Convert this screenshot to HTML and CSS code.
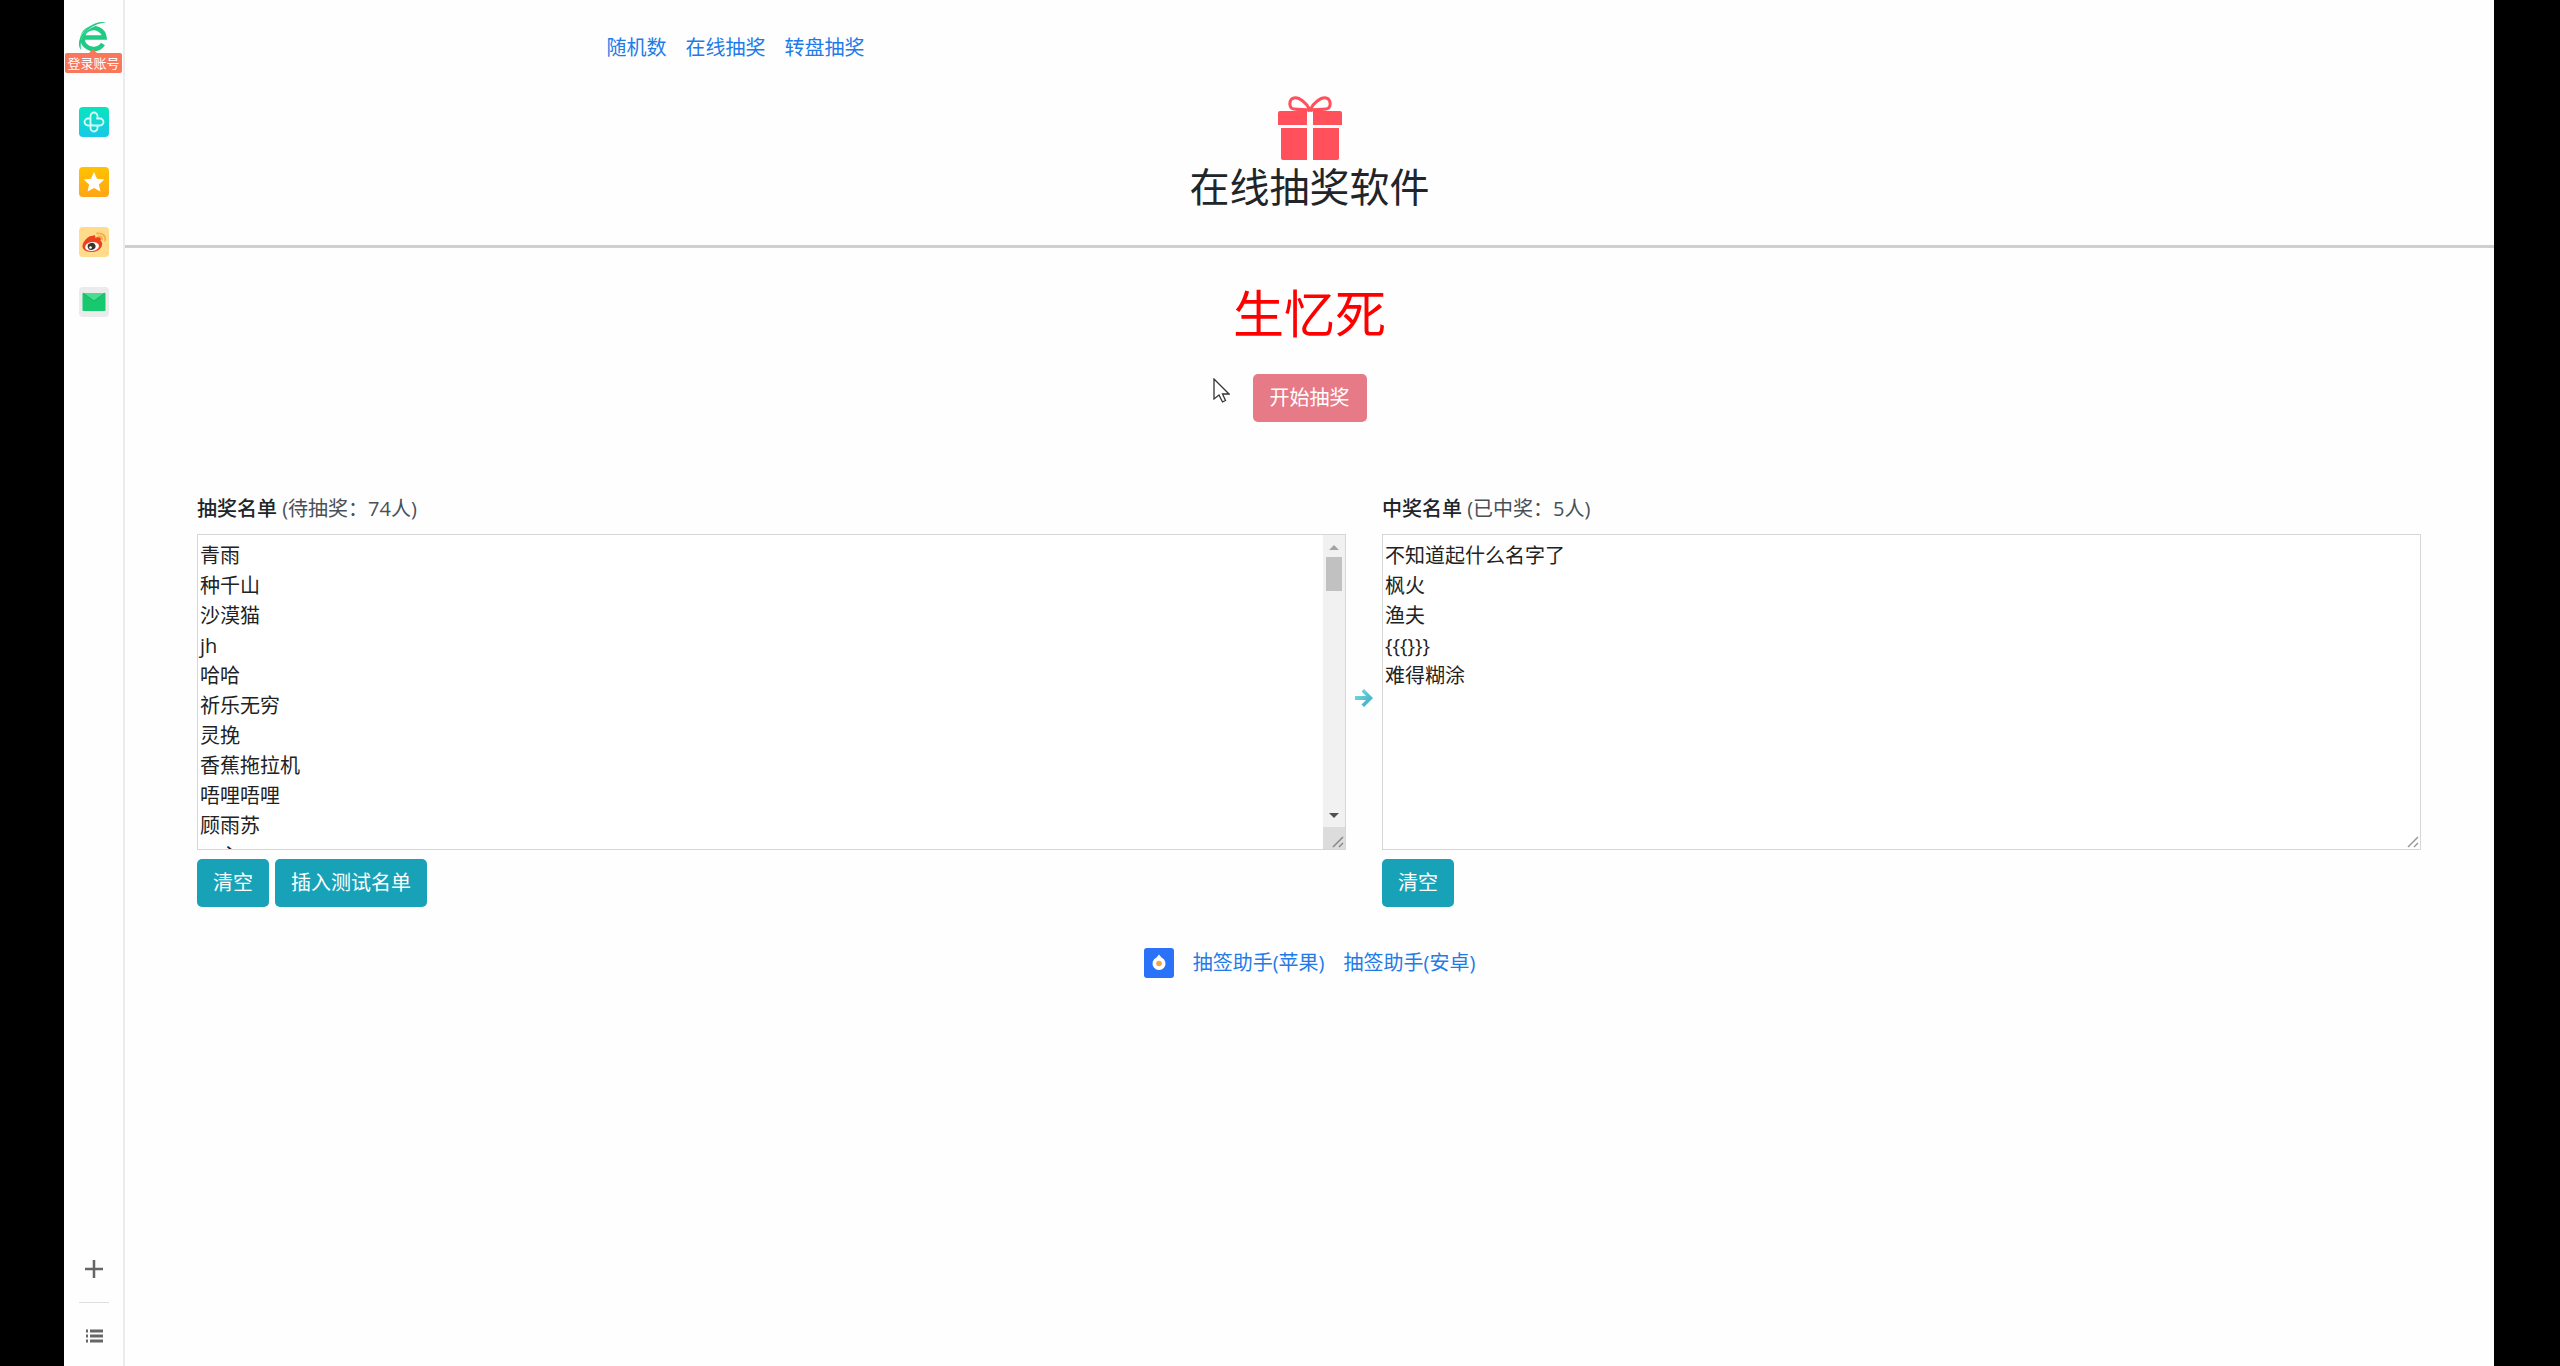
FILE: index.html
```html
<!DOCTYPE html>
<html lang="zh-CN">
<head>
<meta charset="utf-8">
<meta name="viewport" content="width=device-width, initial-scale=1">
<title>在线抽奖软件</title>
<link rel="stylesheet" href="styles.css">
</head>
<body>
<div class="browser">
  <aside class="sidebar">
    <a class="account" href="#">
      <svg class="account-logo" viewBox="0 0 30 30" aria-hidden="true">
        <path d="M6 16.500H26.500A11 10.500 0 1 0 25 23" fill="none" stroke="#1fca82" stroke-width="4.500"/>
        <path d="M2 29C0 23 2 15 8 9.500S22 2 29 2" fill="none" stroke="#fdfdfd" stroke-width="2"/>
        <path d="M3 29C-1 24 1 16 7 9.500S22-1 28 2C22 1.500 15 4 9.500 9.500S2 20 3 29Z" fill="#1fca82"/>
      </svg>
      <span class="account-badge">登录账号</span>
    </a>
    <nav class="shortcuts" aria-label="快捷方式">
      <a href="#" aria-label="健康"><svg viewBox="0 0 30 30"><defs><linearGradient id="teal" x2="0" y2="1"><stop stop-color="#08e5bd"/><stop offset="1" stop-color="#18c8e8"/></linearGradient></defs><rect width="30" height="30" rx="4" fill="url(#teal)"/><path d="M18.500 11V9a3.500 3.500 0 0 0-7 0v7q0 2.500 2.500 2.500H21a3.500 3.500 0 0 0 0-7h-3M11.500 11.500H9a3.500 3.500 0 0 0 0 7h2.500V21a3.500 3.500 0 0 0 7 0v-2" fill="none" stroke="#d8fbf8" stroke-width="1.800" stroke-linecap="round" stroke-linejoin="round"/></svg></a>
      <a href="#" aria-label="收藏"><svg viewBox="0 0 30 30"><defs><linearGradient id="gold" x2="0" y2="1"><stop stop-color="#ffc200"/><stop offset="1" stop-color="#ffa516"/></linearGradient></defs><rect width="30" height="30" rx="4" fill="url(#gold)"/><path d="M15 5l3 6.700 7.300.8-5.400 4.900 1.500 7.200L15 21l-6.400 3.600 1.500-7.200-5.400-4.900 7.300-.8z" fill="#fff"/></svg></a>
      <a href="#" aria-label="微博"><svg viewBox="0 0 30 30"><rect width="30" height="30" rx="4" fill="#ffdb8b"/><path d="M13 9c3-2 4 0 3 2 4-2 7-1 5.500 2.500 4.500 4-.5 11.500-9 11.500C6 25 3 22 3.500 18.500 4 14 10 8 13 9z" fill="#ed401c"/><ellipse cx="13" cy="19.500" rx="7" ry="4.500" fill="#fff" transform="rotate(-8 13 19)"/><ellipse cx="12.500" cy="19.500" rx="4" ry="3.500" fill="#3a3431" transform="rotate(-15 12 19)"/><circle cx="11.500" cy="20.500" r="1.300" fill="#fff"/><path d="M18 6.500c5-1 9 2 8 7M19.500 9.500c3-.5 4 1 3.500 3" fill="none" stroke="#f5b04a" stroke-width="1.800" stroke-linecap="round"/></svg></a>
      <a href="#" aria-label="邮箱"><svg viewBox="0 0 30 30"><rect width="30" height="30" rx="4" fill="#ebebeb"/><rect x="3.500" y="6" width="23" height="18" rx="1" fill="#18c86e"/><path d="M4 6h22l-11 8z" fill="#4bdc91"/><path d="M4 6l11 8 11-8" fill="none" stroke="#10b564"/></svg></a>
    </nav>
    <div class="tools">
      <button class="tool" type="button" aria-label="添加"><svg viewBox="0 0 18 18"><path d="M0 9h18M9 0v18" stroke="#666" stroke-width="2.500"/></svg></button>
      <hr class="tools-line">
      <button class="tool" type="button" aria-label="列表"><svg viewBox="0 0 18 18"><path d="M1 4h2M5 4h13M1 9h2M5 9h13M1 14h2M5 14h13" stroke="#666" stroke-width="3"/></svg></button>
    </div>
  </aside>

  <main class="page">
    <nav class="top-nav">
      <a href="#">随机数</a>
      <a href="#">在线抽奖</a>
      <a href="#">转盘抽奖</a>
    </nav>
    <header class="heading">
      <svg class="gift" viewBox="0 0 64 64" aria-hidden="true">
        <path d="M2 15h27v14H0V17q0-2 2-2zM35 15h27q2 0 2 2v12H35zM3 32h26v32H5q-2 0-2-2zM35 32h26v30q0 2-2 2H35z" fill="#ff505b"/>
        <path d="M32 14C29 7 21 1 16 2s-6 10 0 11 12 0 16 1zM32 14C35 7 43 1 48 2s6 10 0 11-12 0-16 1z" fill="none" stroke="#ff505b" stroke-width="3"/>
      </svg>
      <h1 class="title">在线抽奖软件</h1>
    </header>

    <section class="draw">
      <output class="current">生忆死</output>
      <div class="draw-action">
        <button class="btn btn-draw" type="button">开始抽奖</button>
        <svg class="pointer" viewBox="0 0 17 26" aria-hidden="true"><path d="M1 1v20l5-4 3.500 7 3-1.500L9.500 16H16z" fill="#fff" stroke="#333" stroke-width="1.300"/></svg>
      </div>
    </section>

    <section class="lists">
      <div class="list">
        <label class="list-label" for="waiting"><strong>抽奖名单</strong> <span>(待抽奖：74人)</span></label>
        <div class="box">
          <textarea id="waiting" class="names" spellcheck="false">青雨
种千山
沙漠猫
jh
哈哈
祈乐无穷
灵挽
香蕉拖拉机
唔哩唔哩
顾雨苏
一心</textarea>
          <div class="scrollbar" aria-hidden="true">
            <svg class="scroll-arrow" viewBox="0 0 22 22"><path d="M6 15l5-5 5 5z" fill="#a3a3a3"/></svg>
            <div class="scroll-track"><div class="scroll-thumb"></div></div>
            <svg class="scroll-arrow" viewBox="0 0 22 22"><path d="M6 8h10l-5 5z" fill="#505050"/></svg>
            <svg class="scroll-corner" viewBox="0 0 22 22"><path d="M10 20L20 10M16 20l4-4" stroke="#888" stroke-width="1.500"/></svg>
          </div>
        </div>
        <div class="actions">
          <button class="btn btn-info" type="button">清空</button>
          <button class="btn btn-info" type="button">插入测试名单</button>
        </div>
      </div>
      <svg class="arrow" viewBox="0 0 18 18" aria-hidden="true"><defs><linearGradient id="flow" x2="1" y2="1"><stop stop-color="#7fe0e6"/><stop offset="1" stop-color="#35a8bd"/></linearGradient></defs><path d="M0 7h11L6.500 2.500 9 0l9 9-9 9-2.500-2.500L11 11H0z" fill="url(#flow)"/></svg>
      <div class="list">
        <label class="list-label" for="winners"><strong>中奖名单</strong> <span>(已中奖：5人)</span></label>
        <div class="box">
          <textarea id="winners" class="names" spellcheck="false">不知道起什么名字了
枫火
渔夫
{{{}}}
难得糊涂</textarea>
          <svg class="grip" viewBox="0 0 22 22" aria-hidden="true"><path d="M10 20L20 10M16 20l4-4" stroke="#999" stroke-width="1.500"/></svg>
        </div>
        <div class="actions">
          <button class="btn btn-info" type="button">清空</button>
        </div>
      </div>
    </section>

    <footer class="apps">
      <svg class="app-logo" viewBox="0 0 30 30" aria-hidden="true"><rect width="30" height="30" rx="3" fill="#2a72f8"/><path d="M15 6.500l2.500 3a6.500 6.500 0 1 1-5 0z" fill="#fff"/><circle cx="15" cy="15.500" r="2.800" fill="#f6a545"/></svg>
      <a href="#">抽签助手(苹果)</a>
      <a href="#">抽签助手(安卓)</a>
    </footer>
  </main>
</div>
</body>
</html>
```
FILE: styles.css
```css
* { box-sizing: border-box; }

body {
  margin: 0;
  background: #000;
  color: #212529;
  font: 20px/30px "Open Sans", "Noto Sans CJK SC", sans-serif;
}

svg { display: block; }
a { color: #1e7be8; text-decoration: none; }
button, textarea { font: inherit; }

.browser {
  display: flex;
  min-height: 100vh;
  margin: 0 66px 0 64px;
  background: #fefefe;
}

/* Sidebar */
.sidebar {
  display: flex;
  flex-direction: column;
  align-items: center;
  flex: none;
  width: 61px;
  padding: 21px 0 13px;
  border-right: 2px solid #ececec;
}
.account { display: flex; flex-direction: column; align-items: center; }
.account-logo { width: 30px; height: 30px; }
.account-badge {
  position: relative;
  margin-top: 2px;
  padding: 0 2px;
  border-radius: 2px;
  background: #f9775b;
  color: #fff;
  font-size: 13px;
  line-height: 20px;
  white-space: nowrap;
}
.account-badge::before {
  content: "";
  position: absolute;
  top: -4px;
  left: 50%;
  margin-left: -4px;
  border: solid transparent;
  border-width: 0 4px 4px;
  border-bottom-color: #f9775b;
}
.shortcuts { display: grid; gap: 30px; margin-top: 34px; }
.shortcuts svg { width: 30px; height: 30px; }
.tools { display: grid; justify-items: center; margin-top: auto; }
.tool {
  padding: 8px;
  border: 0;
  background: none;
}
.tool svg { width: 18px; height: 18px; }
.tools-line {
  width: 30px;
  height: 1px;
  margin: 16px 0;
  border: 0;
  background: #dedede;
}

/* Page */
.page { flex: 1; min-width: 0; }
.top-nav {
  display: flex;
  gap: 19px;
  max-width: 1406px;
  margin: 0 auto;
  padding: 33px 0 31px;
}
.heading {
  display: flex;
  flex-direction: column;
  align-items: center;
  padding: 2px 0 31px;
  border-bottom: 3px solid #cfcfcf;
}
.gift { width: 64px; height: 64px; }
.title {
  margin: 0;
  font-size: 40px;
  font-weight: 400;
  line-height: 54px;
}

.draw {
  display: flex;
  flex-direction: column;
  align-items: center;
  padding: 35px 0 72px;
}
.current { color: #f00; font-size: 51px; line-height: 60px; }
.draw-action { position: relative; margin-top: 31px; }
.pointer {
  position: absolute;
  top: 4px;
  right: 100%;
  width: 17px;
  height: 26px;
  margin-right: 23px;
}

.btn {
  height: 48px;
  padding: 0 16px;
  border: 0;
  border-radius: 5px;
  color: #fff;
}
.btn-draw { padding: 0 17px; background: #e77a87; }
.btn-info { background: #17a2b8; }

.lists {
  display: grid;
  grid-template-columns: 1149fr 36px 1039fr;
  padding: 0 73px 0 72px;
}
.list-label { display: block; margin-bottom: 10px; color: #212529; }
.list-label strong { font-weight: 500; }
.list-label span { color: #495057; }
.box {
  position: relative;
  display: flex;
  height: 316px;
  border: 1px solid #d6d6d6;
  background: #fff;
}
.names {
  flex: 1;
  min-width: 0;
  padding: 6px 2px 0;
  border: 0;
  outline: 0;
  background: none;
  color: #222;
  resize: none;
  scrollbar-width: none;
}
.scrollbar { display: flex; flex-direction: column; width: 22px; background: #f1f1f1; }
.scroll-arrow { width: 22px; height: 22px; }
.scroll-track { flex: 1; padding: 0 3px; }
.scroll-thumb { height: 34px; background: #c1c1c1; }
.scroll-corner { width: 22px; height: 22px; background: #dcdcdc; }
.grip { position: absolute; right: 0; bottom: 0; width: 22px; height: 22px; }
.arrow { width: 18px; height: 18px; margin-top: 195px; justify-self: center; }
.actions { display: flex; gap: 6px; margin-top: 9px; }

.apps {
  display: flex;
  justify-content: center;
  gap: 19px;
  margin-top: 41px;
}
.app-logo { width: 30px; height: 30px; }
```
